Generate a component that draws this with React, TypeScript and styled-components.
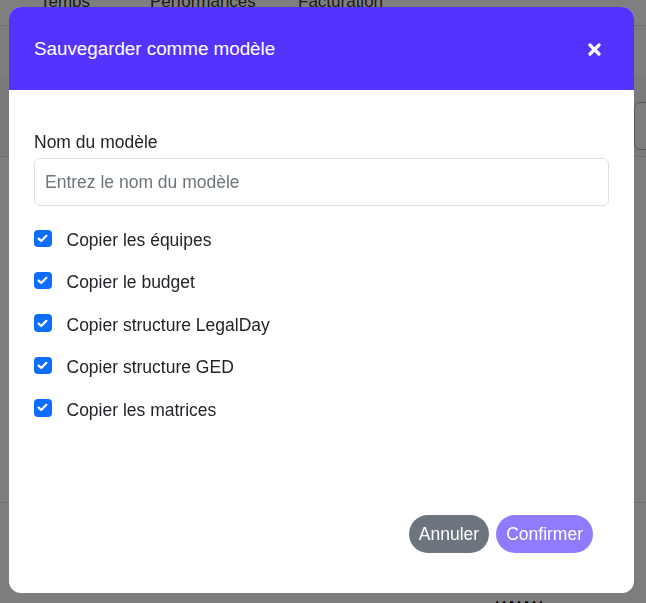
import React from "react";
import styled, { createGlobalStyle } from "styled-components";

const Global = createGlobalStyle`
  html, body { margin: 0; padding: 0; background: #ffffff; }
  body { font-family: "Liberation Sans", Arial, sans-serif; overflow: hidden; }
  * { box-sizing: border-box; }
`;

/* ---------- underlying page (under the backdrop) ---------- */
const Page = styled.div`
  width: 646px;
  height: 603px;
  display: flex;
  flex-direction: column;
  overflow: hidden;
`;

const TabBar = styled.div`
  height: 26px;
  flex: none;
  display: flex;
  align-items: flex-end;
  padding: 0 0 14px 40px;
  border-bottom: 1px solid #dcdcdc;
  overflow: hidden;
`;

const Tab = styled.span<{ $w: number }>`
  width: ${(p) => p.$w}px;
  flex: none;
  font-size: 17px;
  line-height: 18px;
  color: #333;
`;

const Band = styled.div`
  height: 50px;
  flex: none;
  background: #fdfdfd;
`;

const ToolbarArea = styled.div`
  height: 81px;
  flex: none;
  display: flex;
  justify-content: flex-end;
  align-items: flex-end;
  padding-bottom: 6px;
  border-bottom: 1px solid #dcdcdc;
  background: #f4f4f4;
`;

const FakeInput = styled.div`
  width: 40px;
  height: 48px;
  margin-right: -28px;
  border: 1px solid #b0b0b0;
  border-radius: 6px;
  background: #fafafa;
`;

const Content = styled.div`
  height: 346px;
  flex: none;
  border-bottom: 1px solid #dcdcdc;
  background: #fafafa;
`;

const Footer = styled.div`
  flex: 1;
  display: flex;
  justify-content: flex-start;
  align-items: flex-end;
  padding-left: 496px;
  background: #fafafa;
`;

const FooterText = styled.span`
  font-size: 17px;
  line-height: 18px;
  color: #111;
  margin-bottom: -14px;
  letter-spacing: -1px;
`;

/* ---------- modal ---------- */
const Backdrop = styled.div`
  position: fixed;
  inset: 0;
  background: rgba(0, 0, 0, 0.5);
  display: flex;
  align-items: flex-start;
  padding: 7px 12px 0 9px;
`;

const Modal = styled.div`
  width: 625px;
  height: 586px;
  background: #ffffff;
  border-radius: 12px;
  overflow: hidden;
  display: flex;
  flex-direction: column;
`;

const Header = styled.div`
  height: 83px;
  flex: none;
  background: #5533ff;
  display: flex;
  align-items: center;
  justify-content: space-between;
  padding: 0 33px 0 25px;
`;

const Title = styled.h5`
  margin: 0;
  font-size: 18.8px;
  font-weight: 500;
  line-height: 22px;
  color: #ffffff;
`;

const CloseButton = styled.button`
  width: 13px;
  height: 13px;
  padding: 0;
  margin-top: 1px;
  border: none;
  background: transparent;
  display: flex;
  align-items: center;
  justify-content: center;
  cursor: pointer;
`;

const Body = styled.div`
  padding: 42px 25px 0;
  display: flex;
  flex-direction: column;
`;

const Label = styled.label`
  font-size: 17.5px;
  line-height: 21px;
  color: #212529;
  margin-bottom: 5px;
`;

const TextInput = styled.input`
  height: 48px;
  width: 100%;
  border: 1px solid #dee2e6;
  border-radius: 6px;
  padding: 0 10px;
  font-family: "Liberation Sans", Arial, sans-serif;
  font-size: 17.5px;
  color: #212529;
  outline: none;
  &::placeholder { color: #6c757d; }
`;

const Checks = styled.div`
  margin-top: 24px;
  display: flex;
  flex-direction: column;
  gap: 21.4px;
`;

const CheckRow = styled.label`
  display: flex;
  align-items: flex-start;
  gap: 15px;
  font-size: 17.5px;
  line-height: 21px;
  color: #212529;
`;

const Box = styled.span`
  width: 17.5px;
  height: 17.5px;
  flex: none;
  margin-top: -0.5px;
  border-radius: 4px;
  background: #0d6efd;
  display: flex;
  align-items: center;
  justify-content: center;
`;

const ModalFooter = styled.div`
  margin-top: auto;
  display: flex;
  justify-content: flex-end;
  gap: 7px;
  padding: 0 41px 40px 25px;
`;

const Btn = styled.button<{ $variant: "secondary" | "primary" }>`
  height: 38px;
  padding: 0 10px;
  border: none;
  border-radius: 19px;
  font-family: "Liberation Sans", Arial, sans-serif;
  font-size: 17.5px;
  color: #ffffff;
  background: ${(p) => (p.$variant === "secondary" ? "#6c757d" : "#907bff")};
  cursor: pointer;
`;

const Check = () => (
  <Box>
    <svg width="11" height="9" viewBox="0 0 11 9" fill="none">
      <path d="M1.6 4.6 L4.2 7 L9.4 1.8" stroke="#fff" strokeWidth="2.2" strokeLinecap="round" strokeLinejoin="round" />
    </svg>
  </Box>
);

const items = [
  "Copier les équipes",
  "Copier le budget",
  "Copier structure LegalDay",
  "Copier structure GED",
  "Copier les matrices",
];

export default function App() {
  return (
    <>
      <Global />
      <Page>
        <TabBar>
          <Tab $w={110}>Temps</Tab>
          <Tab $w={148}>Performances</Tab>
          <Tab $w={100}>Facturation</Tab>
        </TabBar>
        <Band />
        <ToolbarArea>
          <FakeInput />
        </ToolbarArea>
        <Content />
        <Footer>
          <FooterText>WWW</FooterText>
        </Footer>
      </Page>
      <Backdrop>
        <Modal>
          <Header>
            <Title>Sauvegarder comme modèle</Title>
            <CloseButton aria-label="Fermer">
              <svg width="13" height="13" viewBox="0 0 13 13">
                <path d="M2 2 L11 11 M11 2 L2 11" stroke="#fff" strokeWidth="3.2" strokeLinecap="round" />
              </svg>
            </CloseButton>
          </Header>
          <Body>
            <Label>Nom du modèle</Label>
            <TextInput placeholder="Entrez le nom du modèle" />
            <Checks>
              {items.map((t) => (
                <CheckRow key={t}>
                  <Check />
                  <span>{t}</span>
                </CheckRow>
              ))}
            </Checks>
          </Body>
          <ModalFooter>
            <Btn $variant="secondary">Annuler</Btn>
            <Btn $variant="primary">Confirmer</Btn>
          </ModalFooter>
        </Modal>
      </Backdrop>
    </>
  );
}
